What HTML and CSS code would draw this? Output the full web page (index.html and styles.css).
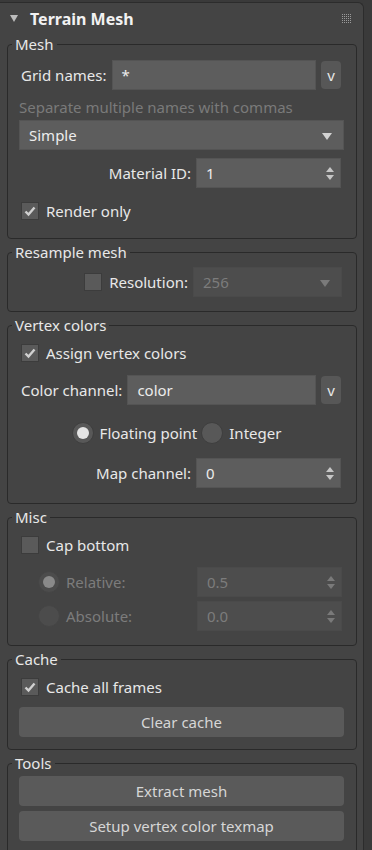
FILE: index.html
```html
<!DOCTYPE html>
<html lang="en">
<head>
    <meta charset="UTF-8">
    <meta name="viewport" content="width=device-width, initial-scale=1.0">
    <title>Terrain Mesh</title>

    <link rel="stylesheet" href="styles.css">
</head>
<body>

    <div class="rollout">
        <div class="rollout-head">
            <span class="caret"></span>
            <span class="title">Terrain Mesh</span>
            <svg class="grip" width="9" height="9" viewBox="0 0 9 9">
                <g fill="#9a9a9a">
                    <rect x="0" y="0" width="1" height="1"/><rect x="2" y="0" width="1" height="1"/><rect x="4" y="0" width="1" height="1"/><rect x="6" y="0" width="1" height="1"/><rect x="8" y="0" width="1" height="1"/>
                    <rect x="0" y="2" width="1" height="1"/><rect x="2" y="2" width="1" height="1"/><rect x="4" y="2" width="1" height="1"/><rect x="6" y="2" width="1" height="1"/><rect x="8" y="2" width="1" height="1"/>
                    <rect x="0" y="4" width="1" height="1"/><rect x="2" y="4" width="1" height="1"/><rect x="4" y="4" width="1" height="1"/><rect x="6" y="4" width="1" height="1"/><rect x="8" y="4" width="1" height="1"/>
                    <rect x="0" y="6" width="1" height="1"/><rect x="2" y="6" width="1" height="1"/><rect x="4" y="6" width="1" height="1"/><rect x="6" y="6" width="1" height="1"/><rect x="8" y="6" width="1" height="1"/>
                    <rect x="0" y="8" width="1" height="1"/><rect x="2" y="8" width="1" height="1"/><rect x="4" y="8" width="1" height="1"/><rect x="6" y="8" width="1" height="1"/><rect x="8" y="8" width="1" height="1"/>
                </g>
            </svg>
        </div>

        <!-- Mesh -->
        <fieldset class="group pb-16">
            <legend>Mesh</legend>
            <div class="row row-field mt-6">
                <span class="lbl">Grid names:</span>
                <div class="field grow">*</div>
                <button class="pick">v</button>
            </div>
            <div class="hint mt-7">Separate multiple names with commas</div>
            <div class="field select full mt-3">Simple<span class="arrow"></span></div>
            <div class="row row-end mt-8">
                <span class="lbl">Material ID:</span>
                <div class="field spinner">1<span class="spin"></span></div>
            </div>
            <div class="row row-check mt-12">
                <span class="check on"><svg width="14" height="14" viewBox="0 0 14 14"><path d="M2.5 7.5 L5.5 10.5 L11.5 3.5" fill="none" stroke="#d0d0d0" stroke-width="2.4"/></svg></span>
                <span class="lbl">Render only</span>
            </div>
        </fieldset>

        <!-- Resample mesh -->
        <fieldset class="group pb-14">
            <legend>Resample mesh</legend>
            <div class="row row-end mt-5">
                <span class="check"></span>
                <span class="lbl res-lbl">Resolution:</span>
                <div class="field select off res-select">256<span class="arrow"></span></div>
            </div>
        </fieldset>

        <!-- Vertex colors -->
        <fieldset class="group pb-15">
            <legend>Vertex colors</legend>
            <div class="row row-check mt-7">
                <span class="check on"><svg width="14" height="14" viewBox="0 0 14 14"><path d="M2.5 7.5 L5.5 10.5 L11.5 3.5" fill="none" stroke="#d0d0d0" stroke-width="2.4"/></svg></span>
                <span class="lbl">Assign vertex colors</span>
            </div>
            <div class="row row-field mt-11">
                <span class="lbl">Color channel:</span>
                <div class="field grow">color</div>
                <button class="pick">v</button>
            </div>
            <div class="row row-radios mt-16">
                <span class="radio on"></span>
                <span class="lbl">Floating point</span>
                <span class="radio"></span>
                <span class="lbl">Integer</span>
            </div>
            <div class="row row-end mt-13">
                <span class="lbl">Map channel:</span>
                <div class="field spinner">0<span class="spin"></span></div>
            </div>
        </fieldset>

        <!-- Misc -->
        <fieldset class="group pb-14">
            <legend>Misc</legend>
            <div class="row row-check mt-7">
                <span class="check"></span>
                <span class="lbl">Cap bottom</span>
            </div>
            <div class="row row-opt mt-11">
                <span class="radio on off"></span>
                <span class="lbl dim">Relative:</span>
                <div class="field spinner off">0.5<span class="spin"></span></div>
            </div>
            <div class="row row-opt mt-4">
                <span class="radio off"></span>
                <span class="lbl dim">Absolute:</span>
                <div class="field spinner off">0.0<span class="spin"></span></div>
            </div>
        </fieldset>

        <!-- Cache -->
        <fieldset class="group pb-12">
            <legend>Cache</legend>
            <div class="row row-check mt-7">
                <span class="check on"><svg width="14" height="14" viewBox="0 0 14 14"><path d="M2.5 7.5 L5.5 10.5 L11.5 3.5" fill="none" stroke="#d0d0d0" stroke-width="2.4"/></svg></span>
                <span class="lbl">Cache all frames</span>
            </div>
            <button class="btn mt-9">Clear cache</button>
        </fieldset>

        <!-- Tools -->
        <fieldset class="group pb-12">
            <legend>Tools</legend>
            <button class="btn mt-3">Extract mesh</button>
            <button class="btn mt-5">Setup vertex color texmap</button>
        </fieldset>
    </div>

</body>
</html>
```

FILE: styles.css
```css
* {
    box-sizing: border-box;
}

body {
    margin: 0;
    background-color: #3a3a3a;
    font-family: "Noto Sans", "Open Sans", sans-serif;
    font-size: 15px;
    color: #e6e6e6;
}

.rollout {
    width: 364px;
    margin-top: 2px;
    padding-bottom: 12px;
    background-color: #444444;
    border: 1px solid #2c2c2c;
    border-left: none;
    border-bottom: none;
    border-top-right-radius: 6px;
}

.rollout-head {
    height: 31px;
    display: flex;
    align-items: center;
    padding: 0 12px 0 10px;
}

.caret {
    width: 0;
    height: 0;
    border-left: 4px solid transparent;
    border-right: 4px solid transparent;
    border-top: 7px solid #bdbdbd;
    margin-right: 12px;
}

.title {
    font-weight: bold;
    font-size: 16px;
    color: #f2f2f2;
}

.grip {
    margin-left: auto;
}

.group {
    margin: 0 6px 0 7px;
    padding: 0 12px 0 11px;
    border: 1px solid #2a2a2a;
    border-radius: 4px;
    min-width: 0;
}

.group + .group {
    margin-top: 3px;
}

.group legend {
    height: 20px;
    line-height: 20px;
    padding: 0 3px;
    margin-left: -7px;
    color: #e8e8e8;
}

.row {
    display: flex;
    align-items: center;
}

.row-field {
    height: 30px;
}

.row-field .lbl {
    margin-left: 2px;
    margin-right: 5px;
}

.row-end {
    height: 30px;
    justify-content: flex-end;
    padding-right: 3px;
}

.row-end .lbl {
    margin-right: 5px;
}

.row-check {
    height: 22px;
    padding-left: 2px;
}

.row-check .check {
    margin-right: 7px;
}

.row-radios {
    height: 24px;
    justify-content: center;
    padding-right: 6px;
}

.row-radios .radio {
    margin-right: 6px;
}

.row-radios .lbl {
    margin-right: 4px;
}

.row-opt {
    height: 30px;
    padding-left: 19px;
    padding-right: 2px;
}

.row-opt .radio {
    margin-right: 6px;
}

.row-opt .spinner {
    margin-left: auto;
}

.lbl {
    white-space: nowrap;
    color: #e8e8e8;
}

.lbl.dim {
    color: #7c7c7c;
}

.hint {
    height: 20px;
    line-height: 20px;
    color: #7a7a7a;
}

.field {
    position: relative;
    height: 30px;
    display: flex;
    align-items: center;
    padding-left: 9px;
    background-color: #5d5d5d;
    border: 1px solid #545454;
    color: #ececec;
}

.field.grow {
    flex: 1;
}

.field.full {
    width: 100%;
}

.field.off {
    background-color: #4d4d4d;
    border-color: #4a4a4a;
    color: #7c7c7c;
}

.spinner {
    width: 145px;
}

.spin {
    position: absolute;
    right: 5px;
    top: 8px;
    width: 9px;
    height: 13px;
}

.spin::before,
.spin::after {
    content: "";
    position: absolute;
    left: 0;
    border-left: 4.5px solid transparent;
    border-right: 4.5px solid transparent;
}

.spin::before {
    top: 0;
    border-bottom: 5px solid #c6c6c6;
}

.spin::after {
    bottom: 0;
    border-top: 5px solid #c6c6c6;
}

.field.off .spin::before {
    border-bottom-color: #7a7a7a;
}

.field.off .spin::after {
    border-top-color: #7a7a7a;
}

.arrow {
    position: absolute;
    right: 11px;
    top: 12px;
    border-left: 5px solid transparent;
    border-right: 5px solid transparent;
    border-top: 7px solid #d2d2d2;
}

.field.off .arrow {
    border-top-color: #7a7a7a;
}

.res-lbl {
    margin-left: 7px;
    margin-right: 7px;
}

.res-select {
    width: 149px;
}

.row-end .res-select {
    margin-right: -1px;
}

.pick {
    width: 20px;
    height: 28px;
    margin-left: 5px;
    margin-right: 3px;
    padding: 0;
    border: none;
    border-radius: 4px;
    background-color: #575757;
    color: #e6e6e6;
    font-family: inherit;
    font-size: 15px;
}

.check {
    width: 18px;
    height: 18px;
    display: flex;
    align-items: center;
    justify-content: center;
    background-color: #5a5a5a;
    border: 1px solid #3c3c3c;
}

.radio {
    width: 22px;
    height: 22px;
    flex-shrink: 0;
    display: flex;
    align-items: center;
    justify-content: center;
    border-radius: 50%;
    background-color: #585858;
    border: 1px solid #3e3e3e;
}

.radio.on::after {
    content: "";
    width: 12px;
    height: 12px;
    border-radius: 50%;
    background-color: #e4e4e4;
}

.radio.off {
    background-color: #4c4c4c;
    border-color: #454545;
}

.radio.on.off::after {
    background-color: #8a8a8a;
}

.btn {
    display: block;
    width: 100%;
    height: 30px;
    padding: 0;
    border: none;
    border-radius: 4px;
    background-color: #5a5a5a;
    color: #d6d6d6;
    font-family: inherit;
    font-size: 15px;
}

.mt-3 { margin-top: 3px; }
.mt-4 { margin-top: 4px; }
.mt-5 { margin-top: 5px; }
.mt-6 { margin-top: 6px; }
.mt-7 { margin-top: 7px; }
.mt-8 { margin-top: 8px; }
.mt-9 { margin-top: 9px; }
.mt-11 { margin-top: 11px; }
.mt-12 { margin-top: 12px; }
.mt-13 { margin-top: 13px; }
.mt-16 { margin-top: 16px; }

.pb-12 { padding-bottom: 12px; }
.pb-14 { padding-bottom: 14px; }
.pb-15 { padding-bottom: 15px; }
.pb-16 { padding-bottom: 16px; }
```
